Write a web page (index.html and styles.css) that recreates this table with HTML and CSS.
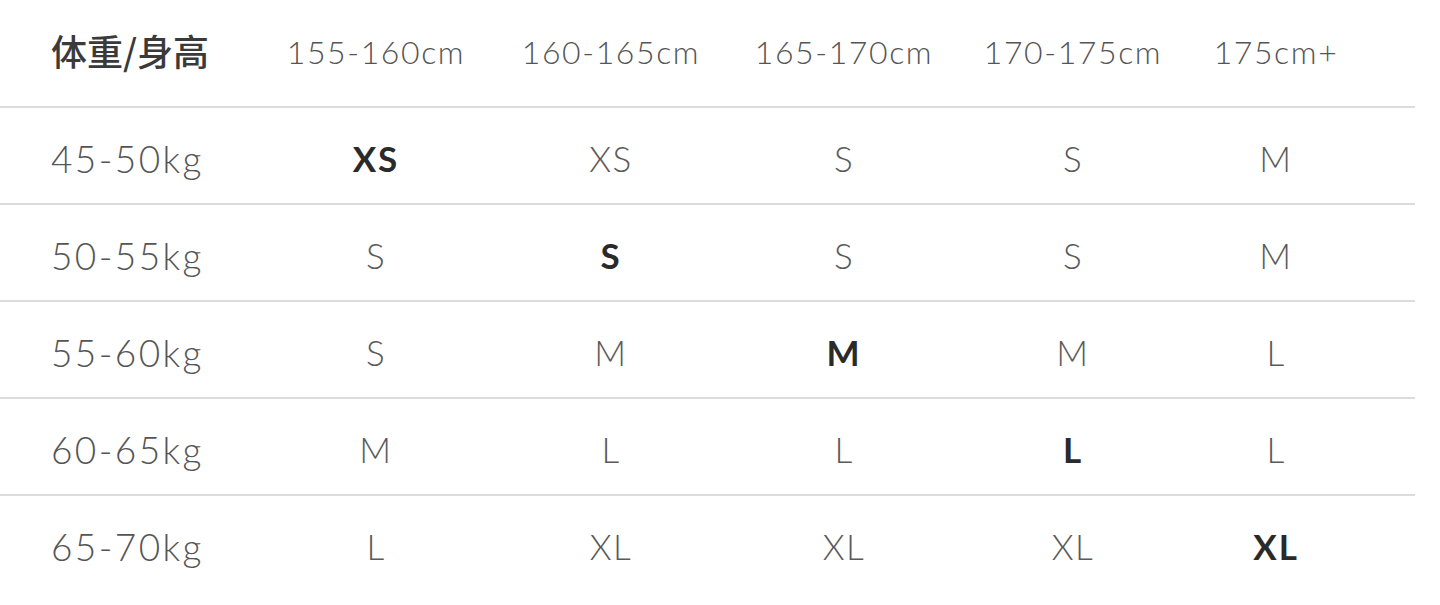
FILE: index.html
```html
<!DOCTYPE html>
<html lang="zh">
<head>
<meta charset="utf-8">
<title>尺码表</title>
<link rel="stylesheet" href="styles.css">
</head>
<body>
<div class="chart">
  <div class="row head">
    <div class="cell label title">体重/身高</div>
    <div class="cell">155-160cm</div>
    <div class="cell">160-165cm</div>
    <div class="cell">165-170cm</div>
    <div class="cell">170-175cm</div>
    <div class="cell">175cm+</div>
  </div>
  <div class="row">
    <div class="cell label">45-50kg</div>
    <div class="cell size strong">XS</div>
    <div class="cell size">XS</div>
    <div class="cell size">S</div>
    <div class="cell size">S</div>
    <div class="cell size">M</div>
  </div>
  <div class="row">
    <div class="cell label">50-55kg</div>
    <div class="cell size">S</div>
    <div class="cell size strong">S</div>
    <div class="cell size">S</div>
    <div class="cell size">S</div>
    <div class="cell size">M</div>
  </div>
  <div class="row">
    <div class="cell label">55-60kg</div>
    <div class="cell size">S</div>
    <div class="cell size">M</div>
    <div class="cell size strong">M</div>
    <div class="cell size">M</div>
    <div class="cell size">L</div>
  </div>
  <div class="row">
    <div class="cell label">60-65kg</div>
    <div class="cell size">M</div>
    <div class="cell size">L</div>
    <div class="cell size">L</div>
    <div class="cell size strong">L</div>
    <div class="cell size">L</div>
  </div>
  <div class="row last">
    <div class="cell label">65-70kg</div>
    <div class="cell size">L</div>
    <div class="cell size">XL</div>
    <div class="cell size">XL</div>
    <div class="cell size">XL</div>
    <div class="cell size strong">XL</div>
  </div>
</div>
</body>
</html>
```

FILE: styles.css
```css
html, body {
  margin: 0;
  padding: 0;
  background: #ffffff;
}

body {
  font-family: Lato, "Noto Sans CJK SC", sans-serif;
  font-weight: 300;
  color: #606060;
}

.chart {
  width: 1415px;
}

.row {
  display: grid;
  grid-template-columns: 258px 236px 234px 232px 226px 180px;
  height: 95px;
  align-items: center;
  border-bottom: 2px solid #dcdcdc;
}

.row.head {
  height: 106px;
}

.row.last {
  border-bottom: none;
}

.cell {
  text-align: center;
  font-size: 35px;
  line-height: 40px;
}

.head .cell {
  font-size: 32px;
  letter-spacing: 1.6px;
  color: #555555;
  padding-bottom: 2px;
}

.cell.label {
  text-align: left;
  padding-left: 51px;
  font-size: 37px;
  letter-spacing: 2.4px;
  color: #555555;
  padding-top: 6px;
}

.head .cell.title {
  font-family: "Noto Sans CJK SC", sans-serif;
  font-size: 36px;
  letter-spacing: 0;
  font-weight: 500;
  color: #3a3a3a;
  padding-top: 0;
  padding-bottom: 6px;
}

.cell.size {
  color: #5a5a5a;
  letter-spacing: 1.5px;
  padding-top: 4px;
}

.cell.size.strong {
  font-weight: 700;
  color: #2a2a2a;
  letter-spacing: 2px;
}
```
